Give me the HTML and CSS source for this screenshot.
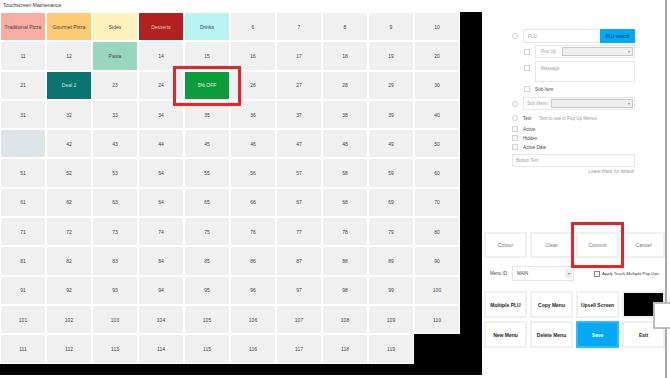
FILE: index.html
```html
<!DOCTYPE html>
<html lang="en">
<head>
    <meta charset="UTF-8">
    <title>Touchscreen Maintenance</title>
    <link rel="stylesheet" href="styles.css">
</head>
<body>
    <div class="layout">
        <div class="left">
            <div class="title">Touchscreen Maintenance</div>
            <div class="board">
                <div class="grid">
                    <div class="cell trad">Traditional Pizza</div><div class="cell gourmet">Gourmet Pizza</div><div class="cell sides">Sides</div><div class="cell desserts">Desserts</div><div class="cell drinks">Drinks</div><div class="cell">6</div><div class="cell">7</div><div class="cell">8</div><div class="cell">9</div><div class="cell">10</div>
                    <div class="cell">11</div><div class="cell">12</div><div class="cell pasta">Pasta</div><div class="cell">14</div><div class="cell">15</div><div class="cell">16</div><div class="cell">17</div><div class="cell">18</div><div class="cell">19</div><div class="cell">20</div>
                    <div class="cell">21</div><div class="cell deal">Deal 2</div><div class="cell">23</div><div class="cell">24</div><div class="cell off">5% OFF</div><div class="cell">26</div><div class="cell">27</div><div class="cell">28</div><div class="cell">29</div><div class="cell">30</div>
                    <div class="cell">31</div><div class="cell">32</div><div class="cell">33</div><div class="cell">34</div><div class="cell">35</div><div class="cell">36</div><div class="cell">37</div><div class="cell">38</div><div class="cell">39</div><div class="cell">40</div>
                    <div class="cell empty"></div><div class="cell">42</div><div class="cell">43</div><div class="cell">44</div><div class="cell">45</div><div class="cell">46</div><div class="cell">47</div><div class="cell">48</div><div class="cell">49</div><div class="cell">50</div>
                    <div class="cell">51</div><div class="cell">52</div><div class="cell">53</div><div class="cell">54</div><div class="cell">55</div><div class="cell">56</div><div class="cell">57</div><div class="cell">58</div><div class="cell">59</div><div class="cell">60</div>
                    <div class="cell">61</div><div class="cell">62</div><div class="cell">63</div><div class="cell">64</div><div class="cell">65</div><div class="cell">66</div><div class="cell">67</div><div class="cell">68</div><div class="cell">69</div><div class="cell">70</div>
                    <div class="cell">71</div><div class="cell">72</div><div class="cell">73</div><div class="cell">74</div><div class="cell">75</div><div class="cell">76</div><div class="cell">77</div><div class="cell">78</div><div class="cell">79</div><div class="cell">80</div>
                    <div class="cell">81</div><div class="cell">82</div><div class="cell">83</div><div class="cell">84</div><div class="cell">85</div><div class="cell">86</div><div class="cell">87</div><div class="cell">88</div><div class="cell">89</div><div class="cell">90</div>
                    <div class="cell">91</div><div class="cell">92</div><div class="cell">93</div><div class="cell">94</div><div class="cell">95</div><div class="cell">96</div><div class="cell">97</div><div class="cell">98</div><div class="cell">99</div><div class="cell">100</div>
                    <div class="cell">101</div><div class="cell">102</div><div class="cell">103</div><div class="cell">104</div><div class="cell">105</div><div class="cell">106</div><div class="cell">107</div><div class="cell">108</div><div class="cell">109</div><div class="cell">110</div>
                    <div class="cell">111</div><div class="cell">112</div><div class="cell">113</div><div class="cell">114</div><div class="cell">115</div><div class="cell">116</div><div class="cell">117</div><div class="cell">118</div><div class="cell">119</div>
                </div>
            </div>
        </div>

        <div class="panel">
            <div class="form">
                <div class="row row-plu">
                    <span class="radio"></span>
                    <div class="plu-group">
                        <div class="input plu-input">PLU</div>
                        <div class="plu-btn">PLU search</div>
                    </div>
                </div>
                <div class="row row-popup indent">
                    <span class="check"></span>
                    <div class="box">
                        <span class="box-label">Pop Up</span>
                        <div class="select popup-select"><span class="caret">▾</span></div>
                    </div>
                </div>
                <div class="row row-message indent">
                    <span class="check"></span>
                    <div class="box textarea">Message</div>
                </div>
                <div class="row row-line indent subitem">
                    <span class="check"></span>
                    <span class="label">Sub-Item</span>
                </div>
                <div class="row row-submenu">
                    <span class="radio"></span>
                    <div class="box">
                        <span class="box-label">Sub Menu</span>
                        <div class="select submenu-select"><span class="caret">▾</span></div>
                    </div>
                </div>
                <div class="row row-line text-row">
                    <span class="radio"></span>
                    <span class="label">Text</span>
                    <span class="hint">Text to use in Pop Up Menus</span>
                </div>
                <div class="row row-line active-row">
                    <span class="check"></span>
                    <span class="label">Active</span>
                </div>
                <div class="row row-line tight">
                    <span class="check"></span>
                    <span class="label">Hidden</span>
                </div>
                <div class="row row-line tight">
                    <span class="check"></span>
                    <span class="label">Active Date</span>
                </div>
                <div class="input button-text">Button Text</div>
                <div class="note">Leave blank for default</div>
            </div>

            <div class="actions">
                <div class="btn-row">
                    <div class="btn">Colour</div>
                    <div class="btn">Clear</div>
                    <div class="btn">Commit</div>
                    <div class="btn">Cancel</div>
                </div>
                <div class="menu-row">
                    <span class="menu-label">Menu ID</span>
                    <div class="menu-select">MAIN<span class="menu-caret">▾</span></div>
                    <span class="check apply-check"></span>
                    <span class="apply-label">Apply Touch Multiple Pop Ups</span>
                </div>
                <div class="btn-row strong">
                    <div class="btn">Multiple PLU</div>
                    <div class="btn">Copy Menu</div>
                    <div class="btn">Upsell Screen</div>
                    <div class="btn black"></div>
                </div>
                <div class="btn-row strong second">
                    <div class="btn">New Menu</div>
                    <div class="btn">Delete Menu</div>
                    <div class="btn save">Save</div>
                    <div class="btn">Exit</div>
                </div>
            </div>
        </div>
    </div>

    <!-- markers drawn over the screen -->
    <div class="highlight highlight-cell"></div>
    <div class="highlight highlight-commit"></div>
    <div class="popup-edge"></div>
</body>
</html>
```

FILE: styles.css
```css
* {
    margin: 0;
    padding: 0;
    box-sizing: border-box;
}

body {
    font-family: "Liberation Sans", Arial, sans-serif;
    background-color: #fff;
    color: #444;
    width: 670px;
    height: 378px;
    overflow: hidden;
    position: relative;
}

.layout {
    display: flex;
    align-items: flex-start;
}

.left {
    width: 482px;
}

.title {
    height: 12px;
    line-height: 11px;
    font-size: 5px;
    padding-left: 3px;
    color: #333;
}

.board {
    width: 482px;
    height: 363px;
    background-color: #000;
}

.grid {
    display: grid;
    grid-template-columns: repeat(10, 46px);
    grid-template-rows: repeat(12, 29.3px);
}

.cell {
    border: 1px solid #fff;
    background-color: #f0f0f0;
    display: flex;
    align-items: center;
    justify-content: center;
    font-size: 5px;
    color: #444;
    white-space: nowrap;
}

.cell.trad { background-color: #f8ada2; }
.cell.gourmet { background-color: #fdcb72; }
.cell.sides { background-color: #fff1bb; }
.cell.desserts { background-color: #b2201f; color: #f1c9c6; }
.cell.drinks { background-color: #b8f3ef; }
.cell.pasta { background-color: #98d7be; }
.cell.deal { background-color: #0b7370; color: #cfe6e4; }
.cell.off { background-color: #0d9b3c; color: #e6f6ea; }
.cell.empty { background-color: #dde5e8; }

/* right hand panel */

.panel {
    width: 185px;
    height: 378px;
    border-right: 2px solid #a8a8a8;
}

.form {
    padding: 29px 0 0 30px;
    width: 153px;
    font-size: 4.5px;
}

.row {
    display: flex;
    align-items: center;
}

.indent {
    padding-left: 12px;
}

.radio,
.check {
    width: 6px;
    height: 6px;
    border: 1px solid #d0d0d0;
    background-color: #fff;
    flex-shrink: 0;
    margin-right: 5px;
}

.radio {
    border-radius: 50%;
}

.row-plu {
    height: 14px;
}

.plu-group {
    display: flex;
    flex: 1;
    height: 14px;
}

.input {
    border: 1px solid #e6e6e6;
    color: #a0a0a0;
    font-size: 4.5px;
    padding-left: 4px;
    display: flex;
    align-items: center;
}

.plu-input {
    width: 77px;
    border-right: none;
}

.plu-btn {
    width: 35px;
    background-color: #03a9f4;
    color: #1b3a4a;
    display: flex;
    align-items: center;
    justify-content: center;
}

.box {
    flex: 1;
    height: 13px;
    border: 1px solid #e6e6e6;
    display: flex;
    align-items: center;
    padding: 0 1px 0 5px;
    color: #a0a0a0;
}

.box-label {
    flex-shrink: 0;
}

.select {
    height: 9px;
    margin-left: auto;
    background-color: #eee;
    border: 1px solid #c8c8c8;
    display: flex;
    align-items: center;
    justify-content: flex-end;
    padding-right: 2px;
}

.caret {
    font-size: 4px;
    color: #999;
}

.popup-select {
    width: 71px;
}

.submenu-select {
    width: 82px;
}

.row-popup {
    margin-top: 2px;
}

.row-message {
    margin-top: 3px;
    align-items: flex-start;
}

.row-message .check {
    margin-top: 4px;
}

.textarea {
    height: 21px;
    align-items: flex-start;
    padding-top: 4px;
}

.row-line {
    height: 8px;
}

.subitem {
    margin-top: 3px;
}

.row-submenu {
    margin-top: 4px;
}

.row-submenu .box {
    padding-left: 3px;
}

.text-row {
    margin-top: 4px;
}

.active-row {
    margin-top: 3px;
}

.tight {
    margin-top: 1px;
}

.label {
    color: #444;
    margin-right: 8px;
}

.hint {
    color: #9a9a9a;
}

.button-text {
    margin-top: 3px;
    height: 13px;
    width: 123px;
    padding-left: 3px;
}

.note {
    width: 123px;
    margin-top: 2px;
    height: 6px;
    line-height: 6px;
    text-align: right;
    color: #9a9a9a;
    padding-right: 1px;
}

/* buttons at the bottom */

.actions {
    margin-top: 57px;
    padding-left: 2px;
}

.btn-row {
    display: grid;
    grid-template-columns: repeat(4, 43px);
    grid-auto-rows: 26px;
    column-gap: 3px;
}

.btn {
    background-color: #fff;
    border: 2px solid #efefef;
    display: flex;
    align-items: center;
    justify-content: center;
    font-size: 5.2px;
    color: #777;
    white-space: nowrap;
}

.strong {
    grid-auto-rows: 27px;
    margin-top: 10px;
}

.strong .btn {
    font-weight: bold;
    color: #222;
    font-size: 5px;
}

.strong.second {
    margin-top: 3px;
}

.btn.black {
    background-color: #000;
    border-color: #f0f0f0;
}

.strong .btn.save {
    background-color: #03a9f4;
    border-color: #32b9f6;
    color: #fff;
}

.menu-row {
    display: flex;
    align-items: center;
    height: 15px;
    margin-top: 8px;
    padding-left: 6px;
    font-size: 4.5px;
}

.menu-label {
    width: 22px;
    color: #444;
}

.menu-select {
    width: 62px;
    height: 15px;
    border: 1px solid #e6e6e6;
    display: flex;
    align-items: center;
    padding-left: 4px;
    color: #444;
}

.menu-caret {
    margin-left: auto;
    margin-right: 1px;
    width: 7px;
    height: 9px;
    background-color: #eee;
    color: #777;
    font-size: 4px;
    display: flex;
    align-items: center;
    justify-content: center;
}

.apply-check {
    margin-left: 20px;
    margin-right: 2px;
    border-color: #888;
}

.apply-label {
    color: #333;
    white-space: nowrap;
    font-size: 4.3px;
}

/* overlays */

.highlight {
    position: absolute;
    border: 3px solid #e8232a;
}

.highlight-cell {
    left: 173px;
    top: 66px;
    width: 68px;
    height: 40px;
}

.highlight-commit {
    left: 571px;
    top: 222px;
    width: 53px;
    height: 46px;
}

.popup-edge {
    position: absolute;
    left: 653px;
    top: 302px;
    width: 22px;
    height: 27px;
    background-color: #fff;
    border: 2px solid #bdbdbd;
}
```
